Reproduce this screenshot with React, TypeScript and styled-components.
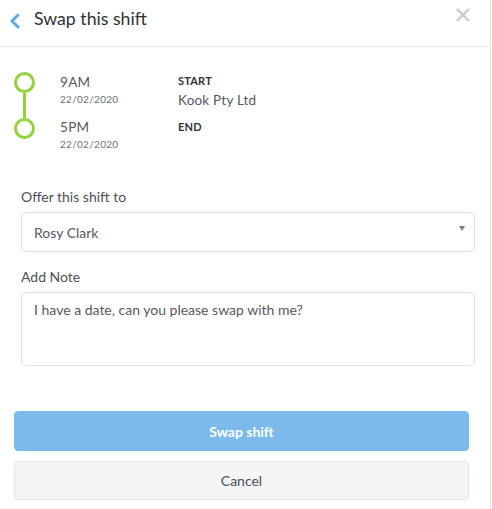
import React from "react";
import styled, { createGlobalStyle } from "styled-components";

const Global = createGlobalStyle`
  html, body { margin: 0; padding: 0; background: #fff; }
  body { font-family: "Lato", "Open Sans", sans-serif; -webkit-font-smoothing: antialiased; }
  * { box-sizing: border-box; }
`;

const Panel = styled.div`
  width: 491px;
  height: 509px;
  border-right: 1px solid #e6e8eb;
  background: #fff;
  display: flex;
  flex-direction: column;
`;

const Header = styled.div`
  height: 47px;
  border-bottom: 1px solid #e8eaed;
  display: flex;
  align-items: flex-start;
  padding: 0 0 0 9px;
  position: relative;
`;

const BackButton = styled.button`
  border: 0;
  background: none;
  padding: 0;
  margin-top: 13px;
  width: 12px;
  height: 16px;
  display: flex;
  cursor: pointer;
`;

const Title = styled.h1`
  margin: 7px 0 0 13px;
  font-size: 17.7px;
  font-weight: 400;
  color: #2f3237;
  line-height: 24px;
`;

const Close = styled.button`
  position: absolute;
  right: 20px;
  top: 8px;
  border: 0;
  background: none;
  padding: 0;
  width: 14px;
  height: 14px;
  display: flex;
  cursor: pointer;
`;

const ShiftWrap = styled.div`
  padding: 25px 0 0 14px;
  display: flex;
  height: 136px;
`;

const Timeline = styled.div`
  width: 21px;
  display: flex;
  flex-direction: column;
  align-items: center;
`;

const Dot = styled.div`
  width: 21px;
  height: 21px;
  border-radius: 50%;
  border: 3px solid #93d23d;
`;

const Line = styled.div`
  width: 3px;
  height: 25px;
  background: #93d23d;
`;

const Times = styled.div`
  margin-left: 25px;
  margin-top: 2px;
  width: 118px;
  display: flex;
  flex-direction: column;
`;

const TimeBlock = styled.div<{ $gap?: number }>`
  display: flex;
  flex-direction: column;
  margin-top: ${(p) => p.$gap ?? 0}px;
`;

const Time = styled.div`
  font-size: 13.5px;
  color: #55595f;
  line-height: 16px;
  letter-spacing: 0.3px;
`;

const DateText = styled.div`
  font-size: 10px;
  color: #6b6f75;
  line-height: 12px;
  margin-top: 3px;
  letter-spacing: 0.3px;
`;

const Info = styled.div`
  display: flex;
  flex-direction: column;
  margin-top: 2px;
`;

const Tag = styled.div<{ $gap?: number }>`
  font-size: 11px;
  font-weight: 700;
  color: #2f3237;
  line-height: 13px;
  margin-top: ${(p) => p.$gap ?? 0}px;
  letter-spacing: 0.2px;
`;

const Company = styled.div`
  font-size: 13.5px;
  color: #55595f;
  line-height: 16px;
  margin-top: 5px;
  letter-spacing: 0.2px;
`;

const Form = styled.div`
  padding: 5px 15px 0 21px;
  display: flex;
  flex-direction: column;
`;

const Label = styled.label`
  font-size: 14px;
  color: #4b4f55;
  line-height: 18px;
  margin-bottom: 6px;
`;

const Select = styled.div`
  height: 40px;
  border: 1px solid #dfe1e4;
  border-radius: 4px;
  display: flex;
  align-items: center;
  justify-content: space-between;
  padding: 0 9px 0 12px;
  font-size: 14px;
  color: #55595f;
  margin-bottom: 16px;
`;

const Caret = styled.span`
  width: 0;
  height: 0;
  border-left: 3.5px solid transparent;
  border-right: 3.5px solid transparent;
  border-top: 5px solid #7a7e84;
  margin-top: -8px;
`;

const Note = styled.textarea`
  height: 74px;
  border: 1px solid #dfe1e4;
  border-radius: 4px;
  padding: 8px 12px;
  font-family: inherit;
  font-size: 14px;
  color: #55595f;
  resize: none;
  line-height: 18px;
  outline: none;
`;

const Actions = styled.div`
  padding: 45px 21px 0 14px;
  display: flex;
  flex-direction: column;
  gap: 10px;
`;

const Button = styled.button<{ $primary?: boolean }>`
  height: ${(p) => (p.$primary ? 40 : 39)}px;
  border-radius: 4px;
  font-family: inherit;
  font-size: 14px;
  cursor: pointer;
  border: 1px solid ${(p) => (p.$primary ? "#7bbaea" : "#e1e4e8")};
  background: ${(p) => (p.$primary ? "#7bbaea" : "#f3f4f6")};
  color: ${(p) => (p.$primary ? "#fff" : "#4b4f55")};
  font-weight: ${(p) => (p.$primary ? 700 : 400)};
`;

export default function App() {
  return (
    <>
      <Global />
      <Panel>
        <Header>
          <BackButton aria-label="Back">
            <svg width="12" height="16" viewBox="0 0 12 16">
              <polyline points="9,2 3,8 9,14" fill="none" stroke="#5fa9e8" strokeWidth="3" strokeLinecap="round" strokeLinejoin="round" />
            </svg>
          </BackButton>
          <Title>Swap this shift</Title>
          <Close aria-label="Close">
            <svg width="14" height="14" viewBox="0 0 14 14">
              <path d="M1 1 L13 13 M13 1 L1 13" stroke="#c9cacc" strokeWidth="2.4" />
            </svg>
          </Close>
        </Header>
        <ShiftWrap>
          <Timeline>
            <Dot />
            <Line />
            <Dot />
          </Timeline>
          <Times>
            <TimeBlock $gap={0}>
              <Time>9AM</Time>
              <DateText>22/02/2020</DateText>
            </TimeBlock>
            <TimeBlock $gap={14}>
              <Time>5PM</Time>
              <DateText>22/02/2020</DateText>
            </TimeBlock>
          </Times>
          <Info>
            <Tag>START</Tag>
            <Company>Kook Pty Ltd</Company>
            <Tag $gap={12}>END</Tag>
          </Info>
        </ShiftWrap>
        <Form>
          <Label>Offer this shift to</Label>
          <Select>
            <span>Rosy Clark</span>
            <Caret />
          </Select>
          <Label>Add Note</Label>
          <Note defaultValue="I have a date, can you please swap with me?" />
        </Form>
        <Actions>
          <Button $primary>Swap shift</Button>
          <Button>Cancel</Button>
        </Actions>
      </Panel>
    </>
  );
}
